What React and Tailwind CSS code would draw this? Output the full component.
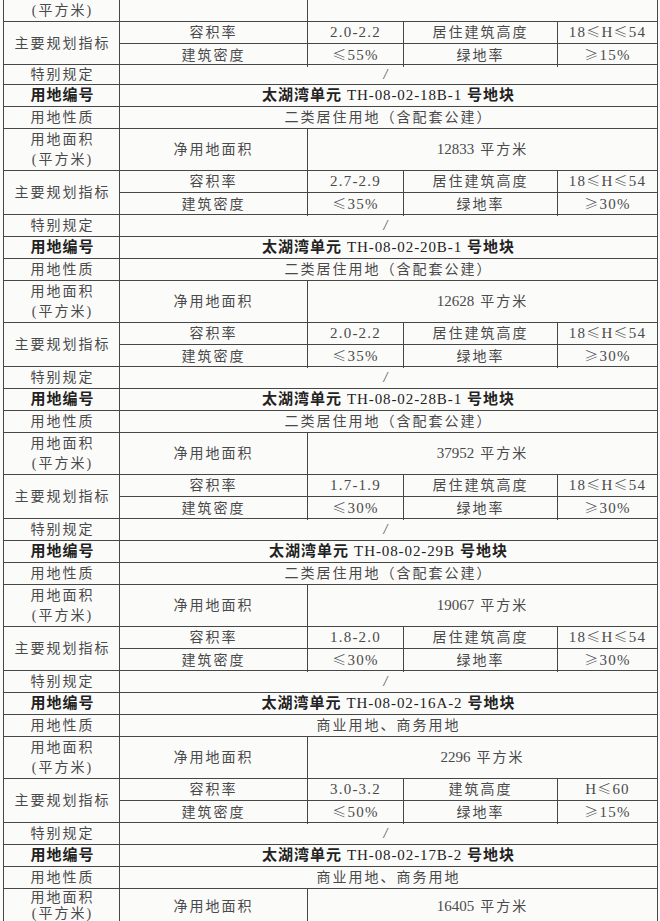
import React from 'react';

const LINE = 'border-[#474747]';

const top = { far: '2.0-2.2', hLabel: '居住建筑高度', h: '18≤H≤54', density: '≤55%', green: '≥15%' };

const blocks = [
    { id: 'TH-08-02-18B-1', use: '二类居住用地（含配套公建）', area: '12833', far: '2.7-2.9', hLabel: '居住建筑高度', h: '18≤H≤54', density: '≤35%', green: '≥30%' },
    { id: 'TH-08-02-20B-1', use: '二类居住用地（含配套公建）', area: '12628', far: '2.0-2.2', hLabel: '居住建筑高度', h: '18≤H≤54', density: '≤35%', green: '≥30%' },
    { id: 'TH-08-02-28B-1', use: '二类居住用地（含配套公建）', area: '37952', far: '1.7-1.9', hLabel: '居住建筑高度', h: '18≤H≤54', density: '≤30%', green: '≥30%' },
    { id: 'TH-08-02-29B', use: '二类居住用地（含配套公建）', area: '19067', far: '1.8-2.0', hLabel: '居住建筑高度', h: '18≤H≤54', density: '≤30%', green: '≥30%' },
    { id: 'TH-08-02-16A-2', use: '商业用地、商务用地', area: '2296', far: '3.0-3.2', hLabel: '建筑高度', h: 'H≤60', density: '≤50%', green: '≥15%' },
    { id: 'TH-08-02-17B-2', use: '商业用地、商务用地', area: '16405', last: true },
];

const Cell = ({ w, className = '', children }) => (
    <div className={`${w} h-full shrink-0 border-r ${LINE} flex items-center justify-center ${className}`}>
        {children}
    </div>
);

const Label = ({ children, bold }) => (
    <Cell w="w-[116px]" className={bold ? 'text-[15px] font-bold text-[#222] tracking-[1px]' : 'text-[14px] tracking-[2px]'}>
        <span className="pl-[2px]">{children}</span>
    </Cell>
);

// ≤ / ≥ set in the CJK face so they come out wide like the scan
const Num = ({ children = '' }) => (
    <span className="text-[15px] tracking-[1.2px]">
        {children.split(/([≤≥])/).map((part, i) =>
            part === '≤' || part === '≥' ? (
                <span key={i} className="font-['Noto_Sans_CJK_SC',sans-serif] text-[14px] font-light">{part}</span>
            ) : (
                <React.Fragment key={i}>{part}</React.Fragment>
            )
        )}
    </span>
);

const Indicators = ({ d, h = 'h-[44px]' }) => (
    <div className={`flex ${h} border-b ${LINE}`}>
        <Label>主要规划指标</Label>
        <div className="flex flex-col w-[538px]">
            <div className={`flex h-[22px] border-b ${LINE}`}>
                <Cell w="w-[188px]" className="text-[14px] tracking-[2px]">容积率</Cell>
                <Cell w="w-[96px]"><Num>{d.far}</Num></Cell>
                <Cell w="w-[154px]" className="text-[14px] tracking-[2px]">{d.hLabel}</Cell>
                <Cell w="w-[100px]"><Num>{d.h}</Num></Cell>
            </div>
            <div className="flex flex-1">
                <Cell w="w-[188px]" className="text-[14px] tracking-[2px]">建筑密度</Cell>
                <Cell w="w-[96px]"><Num>{d.density}</Num></Cell>
                <Cell w="w-[154px]" className="text-[14px] tracking-[2px]">绿地率</Cell>
                <Cell w="w-[100px]"><Num>{d.green}</Num></Cell>
            </div>
        </div>
    </div>
);

const Special = ({ h = 'h-[22px]' }) => (
    <div className={`flex ${h} border-b ${LINE}`}>
        <Label>特别规定</Label>
        <Cell w="w-[538px]" className="text-[14px]">
            <span className="italic pr-[6px]">/</span>
        </Cell>
    </div>
);

const Block = ({ d }) => (
    <>
        <div className={`flex h-[22px] border-b ${LINE}`}>
            <Label bold>用地编号</Label>
            <Cell w="w-[538px]" className="text-[#222]">
                <span className="text-[15px] font-bold tracking-[1px]">太湖湾单元</span>
                <span className="text-[15px] tracking-[0.9px] px-[5px]">{d.id}</span>
                <span className="text-[15px] font-bold tracking-[1px]">号地块</span>
            </Cell>
        </div>
        <div className={`flex h-[22px] border-b ${LINE}`}>
            <Label>用地性质</Label>
            <Cell w="w-[538px]" className="text-[14px] tracking-[2px]">{d.use}</Cell>
        </div>
        <div className={`flex ${d.last ? 'h-[34px]' : 'h-[42px] border-b'} ${LINE}`}>
            <Cell w="w-[116px]" className={`flex-col text-[14px] tracking-[2px] ${d.last ? 'leading-[16px]' : 'leading-[20px]'}`}>
                <span className="pl-[2px]">用地面积</span>
                <span className="pl-[2px]">(平方米)</span>
            </Cell>
            <Cell w="w-[188px]" className="text-[14px] tracking-[2px]">净用地面积</Cell>
            <Cell w="w-[350px]">
                <span className="text-[15px]">{d.area}</span>
                <span className="text-[14px] tracking-[2px] pl-[6px]">平方米</span>
            </Cell>
        </div>
        {!d.last && (
            <>
                <Indicators d={d} />
                <Special />
            </>
        )}
    </>
);

export default function App() {
    return (
        <div className="w-[660px] h-[921px] overflow-hidden bg-[#fbfbfa] pl-[3px] text-[#4a4a4a] font-['Liberation_Serif','Noto_Sans_CJK_SC',serif]">
            <div className={`w-[655px] border-l ${LINE}`}>
                <div className={`flex h-[22px] border-b ${LINE}`}>
                    <Label>(平方米)</Label>
                    <Cell w="w-[188px]" />
                    <Cell w="w-[350px]" />
                </div>
                <Indicators d={top} h="h-[43px]" />
                <Special h="h-[20px]" />
                {blocks.map((d) => (
                    <Block key={d.id} d={d} />
                ))}
            </div>
        </div>
    );
}
